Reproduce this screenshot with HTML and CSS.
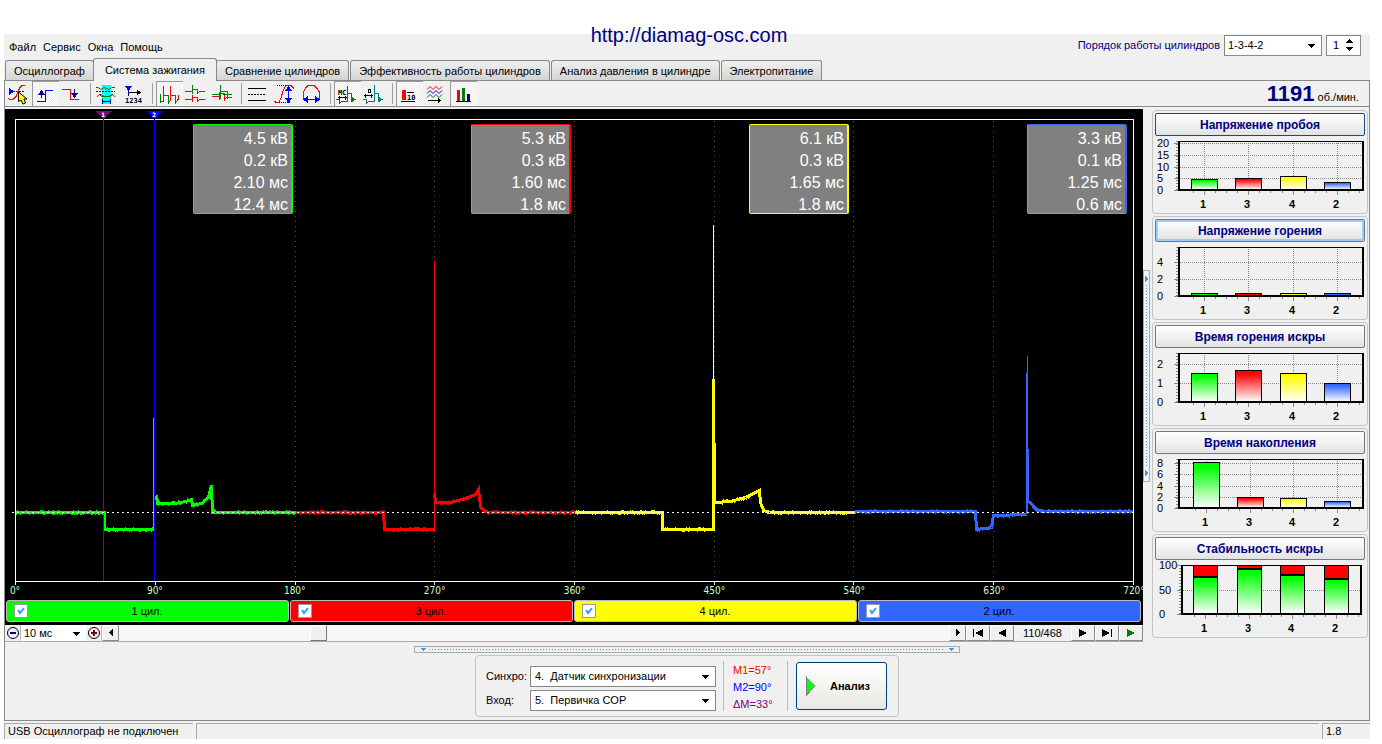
FILE: index.html
```html
<!DOCTYPE html>
<html lang="ru">
<head>
<meta charset="utf-8">
<title>Диамаг — Система зажигания</title>
<link rel="stylesheet" href="styles.css">
</head>
<body>
<div class="window">
  <a class="site-link" href="#">http://diamag-osc.com</a>

  <header class="header">
    <nav class="menu">
      <button type="button">Файл</button>
      <button type="button">Сервис</button>
      <button type="button">Окна</button>
      <button type="button">Помощь</button>
    </nav>
    <div class="order">
      <label for="order">Порядок работы цилиндров</label>
      <span class="combo combo-order">
        <select id="order"><option>1-3-4-2</option></select>
        <svg class="caret" viewBox="0 0 8 4"><path d="M0 0h7L3.500 4z"/></svg>
      </span>
      <span class="combo combo-spin">
        <input id="first" type="text" value="1" aria-label="Первый цилиндр">
        <svg class="spin" viewBox="0 0 8 12"><path d="M0 4h7L3.500 0zM0 8h7L3.500 12z"/></svg>
      </span>
    </div>
  </header>

  <div class="tabs" role="tablist">
    <button type="button" role="tab">Осциллограф</button>
    <button type="button" role="tab" class="active" aria-selected="true">Система зажигания</button>
    <button type="button" role="tab">Сравнение цилиндров</button>
    <button type="button" role="tab">Эффективность работы цилиндров</button>
    <button type="button" role="tab">Анализ давления в цилиндре</button>
    <button type="button" role="tab">Электропитание</button>
  </div>

  <main class="panel">
    <div class="toolbar">
      <button type="button" class="tool" aria-label="Уровень">
        <svg viewBox="0 0 27 25"><path fill="#00f" d="M5 7l5 3.500L5 14z"/><path stroke="#00f" stroke-dasharray="2 1" d="M9 10.500H21"/><path stroke="red" d="M4 17.500l2 1h3l3-3 2-5 2-4 2-2h3"/><path class="smooth" fill="#ff0" stroke="#000" d="M14.500 11v9.500l2.500-1.500 2 4 2.500-1-1.500-4h3z"/></svg></button>
      <button type="button" class="tool on" aria-label="Передний фронт">
        <svg viewBox="0 0 27 25"><path stroke="#00f" d="M6 20.500h8.500v-11H22"/><path stroke="#000080" d="M10.500 10v7"/><path fill="#000080" d="M7 14h7l-3.500-5z"/></svg></button>
      <button type="button" class="tool" aria-label="Задний фронт">
        <svg viewBox="0 0 27 25"><path stroke="red" d="M4 8.500h8.500v10H21"/><path stroke="#000080" d="M16.500 8v7"/><path fill="#000080" d="M13 12h7l-3.500 5z"/></svg></button>
      <span class="sep"></span>
      <button type="button" class="tool" aria-label="Окно усреднения">
        <svg viewBox="0 0 27 25"><path fill="#0ff" d="M9 4h9v19H9z"/><g class="smooth"><path stroke="green" d="M3 6.500h2l3 2 3-2 2 1 3 1 3-2h3"/><path stroke="red" d="M4 16l2-2.500h2l3 2h5l3-2h1l2 2.500"/><path stroke="green" d="M6 13.500l3 2h8l3-2"/></g><path stroke="#000080" stroke-dasharray="2 1" d="M3 10.500h19"/><path stroke="#000080" d="M9.500 18v5M17.500 18v5M10 20.500h7"/></svg></button>
      <button type="button" class="tool" aria-label="Счёт">
        <svg viewBox="0 0 27 25"><path fill="#00f" d="M5 5h7l-3.500 5z"/><path stroke="#000080" d="M8.500 8v7"/><path stroke="#000" d="M9 11.500h10"/><path fill="#000" d="M17 8.500l4 3-4 3z"/><text x="5" y="22" class="mini">1234</text></svg></button>
      <span class="sep"></span>
      <button type="button" class="tool on" aria-label="Парад">
        <svg viewBox="0 0 27 25"><path stroke="green" d="M5.500 22v-9M5 20.500h3.500V5M8 14.500h5.500V22l2-3v-4"/><path stroke="red" d="M15.500 5v15M15 14.500h5.500V22l3-4v-4"/></svg></button>
      <button type="button" class="tool" aria-label="Растр">
        <svg viewBox="0 0 27 25"><path stroke="green" d="M3 10.500h7.500V4v9M11 8.500h4.500v4l2-2H23"/><path stroke="red" d="M3 18.500h7.500v-5 7M11 16.500h4.500v4l2-2H23"/></svg></button>
      <button type="button" class="tool" aria-label="Наложение">
        <svg viewBox="0 0 27 25"><path stroke="red" d="M3 15.500h7.500V11v8M11 12.500h4.500V19l2-3H23"/><path stroke="green" d="M3 13.500h8.500V4v14M12 10.500h6.500v7M14 13.500h9"/></svg></button>
      <span class="sep"></span>
      <button type="button" class="tool" aria-label="Линии">
        <svg viewBox="0 0 27 25"><path stroke="#000" d="M4 7.500h18M4 19.500h18"/><path stroke="#000" stroke-dasharray="2 1" d="M4 13.500h18"/></svg></button>
      <button type="button" class="tool" aria-label="Амплитуда">
        <svg viewBox="0 0 27 25"><path stroke="#000" stroke-dasharray="1 1" d="M6 4.500h11M4 21.500h16"/><path stroke="red" d="M3 20l2 1h3l2-4 2-7 2-4 2-2h4l3 4"/><path stroke="#00f" d="M17.500 7v13"/><path fill="#00f" d="M14 10h7l-3.500-5zM14 17h7l-3.500 5z"/></svg></button>
      <button type="button" class="tool" aria-label="Длительность">
        <svg viewBox="0 0 27 25"><path stroke="red" d="M5.500 18v-7l2-4 3-3h5l3 3 3 4v7"/><path stroke="#00f" d="M8 18.500h12"/><path fill="#00f" d="M10 15v7l-5-3.500zM17 15v7l5-3.500z"/></svg></button>
      <span class="sep"></span>
      <button type="button" class="tool on" aria-label="Миллисекунды">
        <svg viewBox="0 0 27 25"><path stroke="green" d="M3 18.500h3.500v4l2-2h6V5v13M15 12.500h3.500v8l2-2h2"/><path fill="green" d="M19 16l4 2.500-4 2.500z"/><path stroke="#000" d="M5 16.500h9M6.500 15v4M12.500 15v4"/><text x="5" y="14" class="mini">МС</text></svg></button>
      <button type="button" class="tool" aria-label="Градусы">
        <svg viewBox="0 0 27 25"><path stroke="teal" d="M3 18.500h3.500v4l2-2h6V4v14M15 12.500h3.500v8l2-2h2"/><path fill="teal" d="M19 16l4 2.500-4 2.500z"/><path stroke="#000" d="M4 14.500h9M5.500 13v4M11.500 13v4M8.500 8.500h2v3h-2z"/></svg></button>
      <span class="sep"></span>
      <button type="button" class="tool on" aria-label="Цифровые значения">
        <svg viewBox="0 0 27 25"><path fill="red" d="M7 9h4v10H7z"/><path stroke="#000" d="M6 20.500h14M12 11.500h7"/><text x="12" y="19" class="mini">10</text></svg></button>
      <button type="button" class="tool" aria-label="Каналы">
        <svg viewBox="0 0 27 25"><g class="smooth"><path stroke="red" d="M5 8.500l3-3 3 3 3-3 3 3 3-3"/><path stroke="#00f" d="M5 12.500l3-3 3 3 3-3 3 3 3-3"/><path stroke="green" d="M5 16.500l3-3 3 3 3-3 3 3 3-3"/></g><path stroke="#000" d="M6 19.500h12"/><path fill="#000" d="M16 17l3 2.500-3 2.500z"/></svg></button>
      <button type="button" class="tool on" aria-label="Гистограмма">
        <svg viewBox="0 0 27 25"><path fill="red" d="M8 9h3v11H8z"/><path fill="green" d="M13 7h3v13h-3z"/><path fill="#000080" d="M18 13h3v7h-3z"/><path stroke="#000" d="M7 20.500h15"/></svg></button>
      <p class="rpm"><strong>1191</strong> об./мин.</p>
    </div>

    <div class="work">
      <section class="viewer">
        <div class="scope">
          <svg class="plot" viewBox="0 0 1138 476" preserveAspectRatio="none">
            <g class="grid">
              <path d="M290.500 12V472M429.500 12V472M569.500 12V472M709.500 12V472M848.500 12V472M988.500 12V472"/>
            </g>
            <path class="frame" d="M10.500 10.500H1128.500V472.500H10.500z"/>
            <path class="ticks" d="M10.500 472v4M150.500 472v4M290.500 472v4M429.500 472v4M569.500 472v4M709.500 472v4M848.500 472v4M988.500 472v4M1128.500 472v4"/>
            <g id="traces"></g>
            <path class="m1" d="M98.500 4V472"/>
            <path class="zero" d="M7 403.500H1128"/>
            <path class="m2" d="M149.500 4V472"/>
            <path class="flag1" d="M91 2h15l-7.500 8z"/>
            <path class="flag2" d="M142 2h15l-7.500 8z"/>
            <text class="flag-text" x="98" y="8">1</text>
            <text class="flag-text" x="149" y="8">2</text>
          </svg>
          <div class="readouts">
            <div class="readout c1"><span>4.5 кВ</span><span>0.2 кВ</span><span>2.10 мс</span><span>12.4 мс</span></div>
            <div class="readout c2"><span>5.3 кВ</span><span>0.3 кВ</span><span>1.60 мс</span><span>1.8 мс</span></div>
            <div class="readout c3"><span>6.1 кВ</span><span>0.3 кВ</span><span>1.65 мс</span><span>1.8 мс</span></div>
            <div class="readout c4"><span>3.3 кВ</span><span>0.1 кВ</span><span>1.25 мс</span><span>0.6 мс</span></div>
          </div>
          <div class="axis"><span>0°</span><span>90°</span><span>180°</span><span>270°</span><span>360°</span><span>450°</span><span>540°</span><span>630°</span><span>720°</span></div>
          <div class="cylinders">
            <label class="cyl c1"><input type="checkbox" checked><span>1 цил.</span></label>
            <label class="cyl c2"><input type="checkbox" checked><span>3 цил.</span></label>
            <label class="cyl c3"><input type="checkbox" checked><span>4 цил.</span></label>
            <label class="cyl c4"><input type="checkbox" checked><span>2 цил.</span></label>
          </div>
        </div>
        <div class="player">
          <button type="button" class="zoom" aria-label="Уменьшить"><svg viewBox="0 0 14 14"><circle cx="7" cy="7" r="5.500" stroke="#000" fill="none"/><path stroke="#000080" stroke-width="2" d="M4 7h6"/></svg></button>
          <span class="scale">
            <select aria-label="Развёртка"><option>10 мс</option></select>
            <svg class="caret" viewBox="0 0 8 4"><path d="M0 0h7L3.500 4z"/></svg>
          </span>
          <button type="button" class="zoom" aria-label="Увеличить"><svg viewBox="0 0 14 14"><circle cx="7" cy="7" r="5.500" stroke="#000" fill="none"/><path stroke="maroon" stroke-width="2" d="M4 7h6M7 4v6"/></svg></button>
          <button type="button" class="nav small" aria-label="Влево"><svg viewBox="0 0 14 14"><path d="M9 3v7L5 6.500z"/></svg></button>
          <input class="scroll" type="range" min="0" max="468" value="110" aria-label="Кадр">
          <button type="button" class="nav small" aria-label="Вправо"><svg viewBox="0 0 14 14"><path d="M5 3v7l4-3.500z"/></svg></button>
          <button type="button" class="nav" aria-label="В начало"><svg viewBox="0 0 14 14"><path d="M2 3h1v8H2zM12 3v8L4 7z"/></svg></button>
          <button type="button" class="nav" aria-label="Назад"><svg viewBox="0 0 14 14"><path d="M11 3v8L3 7z"/></svg></button>
          <output class="frame-no">110/468</output>
          <button type="button" class="nav" aria-label="Вперёд"><svg viewBox="0 0 14 14"><path d="M3 3v8l8-4z"/></svg></button>
          <button type="button" class="nav" aria-label="В конец"><svg viewBox="0 0 14 14"><path d="M2 3v8l8-4zM11 3h1v8h-1z"/></svg></button>
          <button type="button" class="nav" aria-label="Пуск"><svg viewBox="0 0 14 14"><path fill="green" d="M3 3v8l8-4z"/></svg></button>
        </div>
      </section>

      <div class="split-v">
        <svg viewBox="0 0 3 6"><path d="M0 0v6l3-3z"/></svg><i></i><svg viewBox="0 0 3 6"><path d="M0 0v6l3-3z"/></svg>
      </div>

      <aside class="cards">
        <section class="card"><button type="button" class="default">Напряжение пробоя</button><svg viewBox="0 0 214 77" data-chart="0"></svg></section>
        <section class="card"><button type="button" class="focus">Напряжение горения</button><svg viewBox="0 0 214 77" data-chart="1"></svg></section>
        <section class="card"><button type="button">Время горения искры</button><svg viewBox="0 0 214 77" data-chart="2"></svg></section>
        <section class="card"><button type="button">Время накопления</button><svg viewBox="0 0 214 77" data-chart="3"></svg></section>
        <section class="card"><button type="button">Стабильность искры</button><svg viewBox="0 0 214 77" data-chart="4"></svg></section>
      </aside>
    </div>

    <div class="split-h">
      <svg viewBox="0 0 6 3"><path d="M0 0h6L3 3z"/></svg><i></i><svg viewBox="0 0 6 3"><path d="M0 0h6L3 3z"/></svg>
    </div>

    <section class="settings">
      <div class="fields">
        <label for="sync">Синхро:</label>
        <span class="combo"><select id="sync"><option>4.&nbsp; Датчик синхронизации</option></select><svg class="caret" viewBox="0 0 8 4"><path d="M0 0h7L3.500 4z"/></svg></span>
        <label for="input">Вход:</label>
        <span class="combo"><select id="input"><option>5.&nbsp; Первичка COP</option></select><svg class="caret" viewBox="0 0 8 4"><path d="M0 0h7L3.500 4z"/></svg></span>
      </div>
      <div class="marks"><span class="mk1">М1=57°</span><span class="mk2">М2=90°</span><span class="mkd">ΔМ=33°</span></div>
      <button type="button" class="analyse"><svg viewBox="0 0 9 20"><path fill="#0f0" d="M0 0v19l9-9z"/><path stroke="#808080" fill="none" d="M.5 0v19l8.500-9"/></svg>Анализ</button>
    </section>
  </main>

  <footer class="status"><span>USB Осциллограф не подключен</span><span></span><span>1.8</span></footer>
</div>
<script src="charts.js"></script>
</body>
</html>
```
FILE: charts.js
```js
const NS = 'http://www.w3.org/2000/svg';
const el = (parent, tag, attrs, text) => {
  const node = document.createElementNS(NS, tag);
  for (const key in attrs) node.setAttribute(key, attrs[key]);
  if (text !== undefined) node.textContent = text;
  parent.append(node);
  return node;
};

/* oscillogram: [x, y] points of each cylinder */
const traces = [
  { color: '#00ff00', pts: [[10,403],[99,403],[99,420],[149,420]] },
  { color: '#00ff00', pts: [[151,386],[152,394],[170,394],[180,392],[186,390],[187,396],[196,394],[203,388],[206,376],[207,404],[208,401],[210,403],[290,403]] },
  { color: '#ff0000', pts: [[290,403],[378,403],[379,420],[429,420]] },
  { color: '#ff0000', pts: [[429,384],[430,393],[445,393],[460,389],[470,385],[473,380],[475,397],[479,402],[485,403],[569,403]] },
  { color: '#ffff00', pts: [[569,403],[657,403],[657,420],[708,420],[708,270],[709,393],[725,392],[740,388],[750,383],[754,381],[755,393],[758,401],[764,403],[849,403]] },
  { color: '#3366ff', pts: [[849,402],[970,402],[971,420],[986,418],[988,406],[1021,405]] },
  { color: '#3366ff', pts: [[1024,392],[1028,397],[1032,401],[1040,402],[1127,402]] }
];
const spikes = [
  ['#00ff00', 148, 309, 421], ['#ff0000', 429, 152, 420],
  ['#ffffb0', 708, 116, 275], ['#3366ff', 1022, 247, 405],
  ['#3366ff', 1021, 264, 405], ['#3366ff', 1023, 340, 394]
];
let seed = 7;
const rnd = () => (seed = (seed * 16807) % 2147483647) / 2147483647;
const host = document.getElementById('traces');
for (const t of traces) {
  el(host, 'polyline', { points: t.pts.map(p => (p[0] + 0.5) + ',' + (p[1] + 0.5)).join(' '), stroke: t.color, 'stroke-width': 3 });
  let d = '';
  for (let i = 1; i < t.pts.length; i++) {
    const [x0, y0] = t.pts[i - 1], [x1, y1] = t.pts[i];
    for (let x = x0 + 1; x < x1 && x1 - x0 > 5; x++) {
      const y = Math.round(y0 + (y1 - y0) * (x - x0) / (x1 - x0));
      if (rnd() < 0.4) d += `M${x + 0.5} ${y - (rnd() < 0.4 ? 2 : 1)}v4`;
    }
  }
  el(host, 'path', { d, stroke: t.color });
}
for (const [stroke, x, y0, y1] of spikes) el(host, 'path', { d: `M${x + 0.5} ${y0}V${y1}`, stroke });

/* bar charts of the side panel */
const colors = ['#00ff00', '#ff0000', '#ffff00', '#3366ff'];
const charts = [
  { unit: 2.34, ticks: [0, 5, 10, 15, 20], values: [4.5, 5.3, 6.1, 3.3], centers: [51, 95, 140, 184] },
  { unit: 8.45, ticks: [0, 2, 4], values: [0.3, 0.3, 0.3, 0.3], centers: [51, 95, 140, 184] },
  { unit: 19, ticks: [0, 1, 2], values: [1.55, 1.68, 1.55, 1], centers: [51, 95, 140, 184] },
  { unit: 5.6, ticks: [0, 2, 4, 6, 8], values: [8.3, 1.9, 1.75, 1.25], centers: [53, 97, 140, 184] },
  { unit: 0.49, ticks: [0, 50, 100], values: [78, 94, 82, 74], centers: [52, 96, 139, 183], stacked: true }
];
document.querySelectorAll('[data-chart]').forEach((svg, n) => {
  const c = charts[n], left = c.stacked ? 28 : 25, right = c.stacked ? 208 : 210, base = 54, top = 5;
  const defs = el(svg, 'defs', {});
  colors.forEach((color, i) => {
    const g = el(defs, 'linearGradient', { id: `g${n}${i}`, x1: 0, y1: 0, x2: 0, y2: 1 });
    el(g, 'stop', { offset: '10%', 'stop-color': c.stacked ? colors[0] : color });
    el(g, 'stop', { offset: '100%', 'stop-color': '#fff' });
  });
  for (const v of c.ticks) {
    const y = Math.round(base - v * c.unit) + 0.5;
    if (v) el(svg, 'path', { class: 'dots', d: `M${left} ${y}H${right}` });
    el(svg, 'path', { class: 'tick', d: `M${left - 4} ${y}h4` });
    el(svg, 'text', { x: c.stacked ? 6 : 4, y: y + 3.5 }, v);
  }
  el(svg, 'path', { class: 'minor', d: `M${left - 1} ${top}V${base}` });
  c.centers.forEach((x, i) => {
    if (!c.stacked) el(svg, 'path', { class: 'dots', d: `M${x + 0.5} ${top}V${base}` });
    el(svg, 'path', { class: 'tick', d: `M${x + 0.5} ${base}v5M${x - 10.5} ${base}v3M${x + 11.5} ${base}v3M${x + 22.5} ${base}v3` });
    const y = Math.round(base - c.values[i] * c.unit) + 1, w = c.stacked ? 24 : 26;
    if (c.stacked) el(svg, 'rect', { class: 'bar', x: x - w / 2 + 0.5, y: top + 0.5, width: w, height: base - top, fill: '#f00' });
    el(svg, 'rect', { class: 'bar', x: x - w / 2 + 0.5, y: y - 0.5, width: w, height: base - y, fill: base - y < 5 ? colors[i] : `url(#g${n}${i})` });
    if (c.stacked) el(svg, 'path', { class: 'cap', d: `M${x - w / 2} ${y}h${w}` });
    el(svg, 'text', { class: 'num', x: x - 1, y: 72 }, [1, 3, 4, 2][i]);
  });
  el(svg, 'path', { class: 'box', d: `M${left} ${top + 0.5}H${right}` });
  el(svg, 'path', { class: 'axis-line', d: `M${left + 1} ${top}V${base}H${right}V${top}` });
});
```
FILE: styles.css
```css
* { box-sizing: border-box; }
body {
  margin: 0;
  background: #fff;
  color: #000;
  font: 11px/14px "Liberation Sans", Arial, sans-serif;
}
button, select, input { font: inherit; color: inherit; margin: 0; padding: 0; border-radius: 0; }
svg { display: block; fill: none; shape-rendering: crispEdges; }
p { margin: 0; }
.smooth { shape-rendering: geometricPrecision; }

.window { position: relative; margin: 34px 12px 0 4px; background: #f0f0f0; }
.site-link {
  position: absolute; top: -10px; left: 0; right: 0;
  text-align: center; text-decoration: none;
  font-size: 20px; line-height: 23px; color: #000080;
  padding-left: 4px;
}

.header { display: flex; justify-content: space-between; height: 24px; }
.menu { display: flex; align-items: center; gap: 7px; padding: 2px 0 0 5px; }
.menu button { border: 0; background: none; }
.order { display: flex; align-items: center; gap: 4px; padding: 0 9px 2px 0; color: #000080; }
.combo { position: relative; display: block; height: 21px; background: #fff; border: 1px solid #888; color: #000; }
.combo select, .combo input { appearance: none; display: block; width: 100%; height: 19px; border: 0; background: none; padding: 0 3px; }
.caret { position: absolute; right: 5px; top: 50%; width: 8px; height: 4px; margin-top: -1px; fill: #000; pointer-events: none; }
.combo-order { width: 98px; }
.combo-spin { width: 35px; }
.combo-spin input { padding-left: 6px; }
.spin { position: absolute; right: 6px; top: 3px; width: 8px; height: 12px; fill: #000; }

.tabs { display: flex; align-items: flex-end; height: 22px; gap: 1px; padding-left: 1px; }
.tabs button {
  height: 20px; padding: 0 8px; border: 1px solid #888; border-bottom: 0; border-radius: 3px 3px 0 0;
  background: linear-gradient(#f0f0f0, #d4d4d4);
}
.tabs .active { position: relative; z-index: 1; height: 23px; margin: 0 -2px -1px; background: #f0f0f0; padding: 0 11px; }

.panel { border: 1px solid #888; display: flex; flex-direction: column; padding-bottom: 3px; }
.toolbar { display: flex; height: 26px; border-bottom: 1px solid #888; }
.tool { width: 27px; height: 25px; border: 0; background: none; border-left: 1px solid transparent; border-top: 1px solid transparent; }
.tool svg { width: 27px; height: 25px; margin: -1px 0 0 -2px; }
.tool.on { border-color: #999; background: repeating-conic-gradient(#fff 0 25%, #ececec 0 50%) 0 0 / 2px 2px; }
.mini { font: bold 7px "DejaVu Sans Mono", monospace; fill: #000; }
.sep { width: 8px; background: linear-gradient(#a0a0a0, #a0a0a0) 4px 2px / 1px 21px no-repeat; }
.rpm { margin-left: auto; padding-right: 10px; line-height: 26px; }
.rpm strong { font-size: 22px; color: #000080; }

.work { display: flex; padding-top: 2px; }
.viewer { flex: 1; min-width: 0; }
.scope { position: relative; background: #000; padding-bottom: 3px; }
.plot { width: 100%; height: 476px; }
.grid { stroke: #555; stroke-dasharray: 1 4; }
.frame, .ticks { stroke: #fff; }
.m1 { stroke: #800080; }
.m2 { stroke: #00f; }
.flag1 { fill: #800080; }
.flag2 { fill: #00f; }
.flag-text { fill: #fff; font: bold 6px "DejaVu Sans", sans-serif; text-anchor: middle; }
.zero { stroke: #fff; stroke-dasharray: 2 3; }
.readouts { position: absolute; top: 15px; left: 0; right: 16px; display: flex; justify-content: space-between; padding-left: 188px; }
.readout {
  display: flex; flex-direction: column; width: 100px; height: 90px; padding: 3px 3px 0 0;
  background: #808080; border: 1px solid; border-right-width: 2px; border-radius: 2px;
  text-align: right; font-size: 16px; line-height: 22px;
}
.readout span { color: #fff; }
.readout.c1 { border-color: #0f0 #0f0 #999 #999; }
.readout.c2 { border-color: #f00 #f00 #999 #999; }
.readout.c3 { border-color: #ff0; }
.readout.c4 { border-color: #36f #36f #999 #999; }
.axis { display: flex; justify-content: space-between; height: 15px; padding: 0 9px 0 10px; color: #cfc; font: 10px/12px "DejaVu Sans Condensed", sans-serif; }
.axis span { width: 0; display: flex; justify-content: center; }
.cylinders { display: flex; gap: 1px; padding: 0 2px 0 1px; }
.cyl { flex: 1; display: flex; align-items: center; height: 22px; border: 1px solid #bbb; border-radius: 3px; }
.cyl span { flex: 1; text-align: center; padding-right: 22px; }
.cyl input {
  appearance: none; width: 14px; height: 14px; margin-left: 7px; border: 1px solid #999;
  background: #fff url("data:image/svg+xml,%3Csvg xmlns='http://www.w3.org/2000/svg' viewBox='0 0 12 12'%3E%3Cpath d='M3 5l2 3 4-5' fill='none' stroke='%2339f' stroke-width='2'/%3E%3C/svg%3E");
}
.cyl.c1 { background: #0f0; }
.cyl.c2 { background: #f00; }
.cyl.c3 { background: #ff0; }
.cyl.c4 { background: #36f; }

.player { display: flex; height: 17px; border-bottom: 1px solid #aaa; }
.zoom, .nav { border: 1px solid; border-color: #fff #888 #888 #fff; background: #f0f0f0; width: 24px; display: flex; align-items: center; justify-content: center; flex: none; }
.zoom { width: 16px; border-color: transparent #bbb transparent transparent; }
.zoom svg { shape-rendering: auto; }
.nav.small { width: 17px; }
.zoom svg, .nav svg { width: 14px; height: 14px; flex: none; }
.nav svg { fill: #000; }
.scale { position: relative; width: 65px; background: #fff; flex: none; }
.scale select { appearance: none; display: block; border: 0; background: none; width: 100%; height: 16px; padding-left: 3px; }
.scroll { appearance: none; flex: 1; min-width: 0; height: 16px; background: repeating-conic-gradient(#fff 0 25%, #f0f0f0 0 50%) 0 0 / 2px 2px; }
.scroll::-webkit-slider-thumb { appearance: none; width: 17px; height: 16px; background: #f0f0f0; border: 1px solid; border-color: #fff #777 #777 #fff; }
.frame-no { width: 57px; text-align: center; line-height: 17px; }

.split-v, .split-h { border: 1px solid #aaa; display: flex; align-items: center; justify-content: space-between; }
.split-v { flex-direction: column; align-self: center; width: 7px; height: 212px; padding: 5px 0; margin-right: 2px; }
.split-v svg { width: 3px; height: 6px; fill: #39f; }
.split-v i { flex: 1; width: 1px; margin: 3px 0; background: repeating-linear-gradient(#39f 0 1px, transparent 1px 3px); }
.split-h { align-self: center; width: 40%; height: 7px; padding: 0 5px; margin-top: 4px; }
.split-h svg { width: 6px; height: 3px; fill: #39f; }
.split-h i { flex: 1; height: 1px; margin: 0 3px; background: repeating-linear-gradient(90deg, #39f 0 1px, transparent 1px 3px); }

.cards { display: flex; flex-direction: column; gap: 2px; padding-top: 1px; margin-right: 1px; width: 216px; }
.card { border: 1px solid #c4c4c4; border-radius: 4px; padding-top: 2px; height: 104px; }
.card button {
  display: block; width: 210px; height: 23px; margin: 0 auto; border: 1px solid #777; border-radius: 2px;
  background: linear-gradient(#fff, #e2e2e2); color: #000080; font-size: 12px; font-weight: bold;
}
.card .default { border-color: #1c4a78; }
.card .focus { box-shadow: inset 0 0 0 2px #9cf; }
.card svg { width: 214px; height: 77px; }
.card text { fill: #000; }
.card .num { font-weight: bold; text-anchor: middle; }
.dots { stroke: #888; stroke-dasharray: 1 1; }
.tick { stroke: #888; }
.minor { stroke: #888; stroke-width: 2; stroke-dasharray: 1 2; }
.bar, .box { stroke: #000; }
.axis-line, .cap { stroke: #000; stroke-width: 2; }

.settings { align-self: center; display: flex; align-items: center; margin-top: 2px; height: 62px; border: 1px solid #c4c4c4; border-radius: 4px; padding: 0 11px 0 10px; }
.fields { display: grid; grid-template-columns: 43px 186px; gap: 3px 1px; align-items: center; padding-top: 4px; }
.fields .combo select { padding-left: 4px; }
.marks { display: flex; flex-direction: column; gap: 3px; height: 50px; width: 65px; margin: 0 8px 0 7px; padding: 2px 0 0 9px; border: solid #bbb; border-width: 0 1px; }
.mk1 { color: red; }
.mk2 { color: #00f; }
.mkd { color: purple; }
.analyse { display: flex; align-items: center; gap: 15px; width: 91px; height: 48px; padding-left: 9px; border: 1px solid #003c74; border-radius: 3px; background: linear-gradient(#fff, #e8e8e2); font-weight: bold; }
.analyse svg { width: 9px; height: 20px; }

.status { display: flex; gap: 3px; padding-top: 2px; }
.status span { height: 16px; padding-left: 3px; border: solid #aaa; border-width: 1px 0 0 1px; line-height: 15px; }
.status span:nth-child(1) { width: 189px; }
.status span:nth-child(2) { flex: 1; }
.status span:nth-child(3) { width: 48px; }
```
